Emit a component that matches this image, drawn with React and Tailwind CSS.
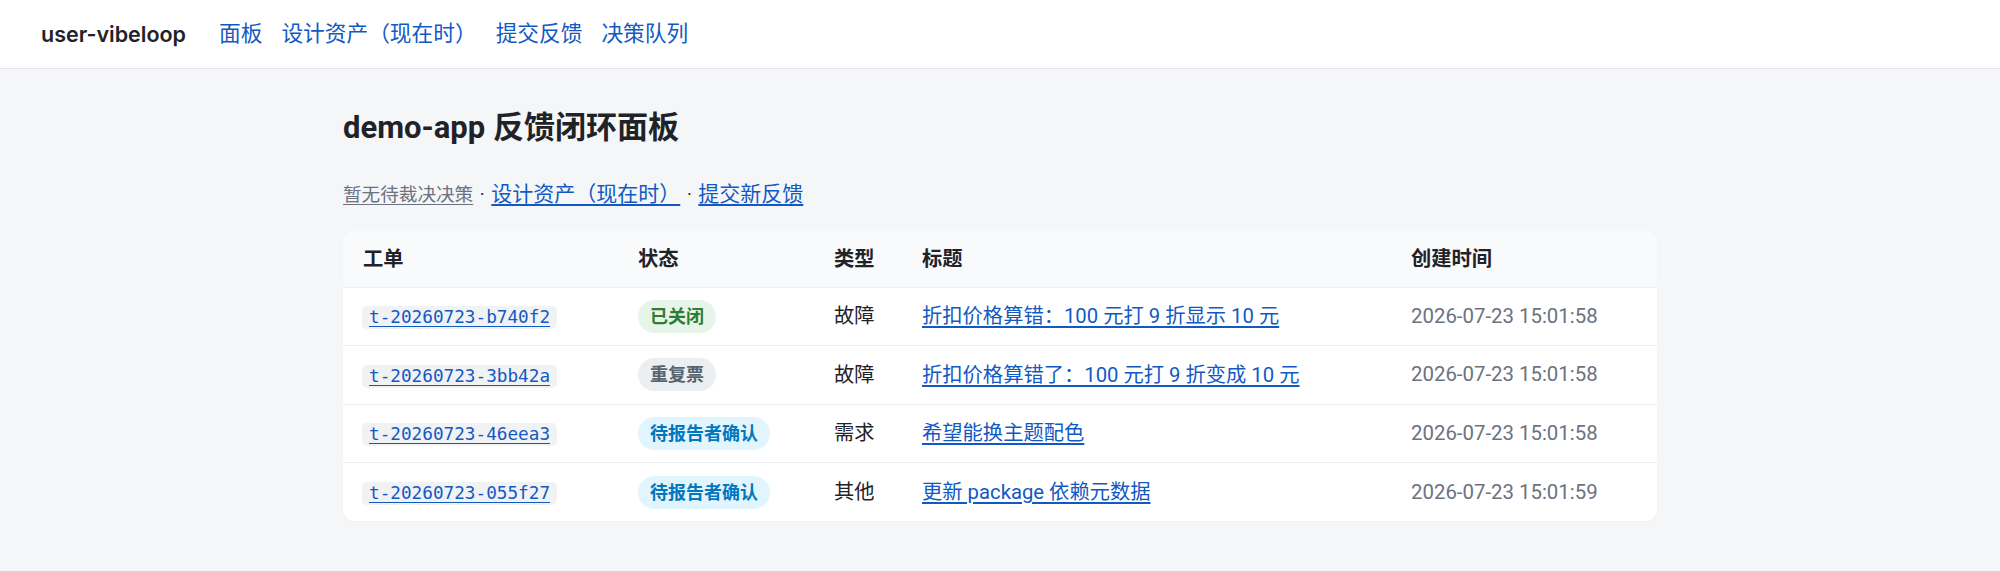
const tickets = [
  { id: 't-20260723-b740f2', status: 'closed', type: '故障', title: '折扣价格算错：100 元打 9 折显示 10 元', created: '2026-07-23 15:01:58' },
  { id: 't-20260723-3bb42a', status: 'duplicate', type: '故障', title: '折扣价格算错了：100 元打 9 折变成 10 元', created: '2026-07-23 15:01:58' },
  { id: 't-20260723-46eea3', status: 'pending', type: '需求', title: '希望能换主题配色', created: '2026-07-23 15:01:58' },
  { id: 't-20260723-055f27', status: 'pending', type: '其他', title: '更新 package 依赖元数据', created: '2026-07-23 15:01:59' },
]

const statusMeta = {
  closed: { label: '已关闭', cls: 'bg-[#e6f4ea] text-[#2e7d32]' },
  duplicate: { label: '重复票', cls: 'bg-[#eceff1] text-[#55656f]' },
  pending: { label: '待报告者确认', cls: 'bg-[#e1f5fe] text-[#0277bd]' },
}

function StatusPill({ status }) {
  const m = statusMeta[status]
  return (
    <span className={`inline-flex items-center h-[33px] px-[12px] rounded-full text-[18px] font-semibold ${m.cls}`}>{m.label}</span>
  )
}

export default function App() {
  return (
    <div className="min-h-screen bg-[#f5f6f8] text-[#1f2328] font-['Roboto','Noto_Sans_CJK_SC',sans-serif] text-[20.3px]">
      <nav className="h-[69px] bg-white border-b border-[#e3e5e8] flex items-center px-[41px]">
        <span className="font-['Inter','Noto_Sans_CJK_SC',sans-serif] font-semibold text-[21.5px] text-[#1f2328] mr-[33px]">user-vibeloop</span>
        <div className="flex items-center gap-[19px] text-[21.7px] text-[#1259c3]">
          <a href="#">面板</a>
          <a href="#">设计资产（现在时）</a>
          <a href="#">提交反馈</a>
          <a href="#">决策队列</a>
        </div>
      </nav>

      <main className="w-[1314px] mx-auto pt-[40px]">
        <h1 className="text-[31px] font-bold leading-[38px]">demo-app 反馈闭环面板</h1>
        <p className="mt-[32px] leading-[30px]">
          <a href="#" className="text-[18.6px] text-[#6b7280] underline underline-offset-[3px]">暂无待裁决决策</a>
          <span className="text-[18.6px] mx-[2px]"> · </span>
          <a href="#" className="text-[21px] text-[#1259c3] underline underline-offset-[3px]">设计资产（现在时）</a>
          <span className="text-[18.6px] mx-[2px]"> · </span>
          <a href="#" className="text-[21px] text-[#1259c3] underline underline-offset-[3px]">提交新反馈</a>
        </p>

        <div className="mt-[21px] bg-white rounded-[11px] overflow-hidden shadow-[0_1px_2px_rgba(0,0,0,0.03)]">
          <table className="w-full border-collapse table-fixed">
            <colgroup>
              <col className="w-[275px]" />
              <col className="w-[196px]" />
              <col className="w-[88px]" />
              <col className="w-[489px]" />
              <col />
            </colgroup>
            <thead>
              <tr className="h-[56px] bg-[#f9fafb] border-b border-[#eceef1] text-left">
                <th className="px-[20px] font-semibold">工单</th>
                <th className="px-[20px] font-semibold">状态</th>
                <th className="px-[20px] font-semibold">类型</th>
                <th className="px-[20px] font-semibold">标题</th>
                <th className="px-[20px] font-semibold">创建时间</th>
              </tr>
            </thead>
            <tbody>
              {tickets.map((t, i) => (
                <tr key={t.id} className={`h-[58.5px] ${i > 0 ? 'border-t border-[#eceef1]' : ''}`}>
                  <td className="px-[19px]">
                    <code className="inline-block bg-[#f1f2f4] rounded-[5px] px-[7px] leading-[23px] font-['DejaVu_Sans_Mono',monospace] text-[17.7px]">
                      <a href="#" className="text-[#1259c3] underline underline-offset-[3px]">{t.id}</a>
                    </code>
                  </td>
                  <td className="px-[20px]"><StatusPill status={t.status} /></td>
                  <td className="px-[20px]">{t.type}</td>
                  <td className="px-[20px]">
                    <a href="#" className="text-[#1259c3] underline underline-offset-[3px]">{t.title}</a>
                  </td>
                  <td className="px-[20px] text-[20.4px] text-[#6b7280]">{t.created}</td>
                </tr>
              ))}
            </tbody>
          </table>
        </div>
      </main>
    </div>
  )
}
